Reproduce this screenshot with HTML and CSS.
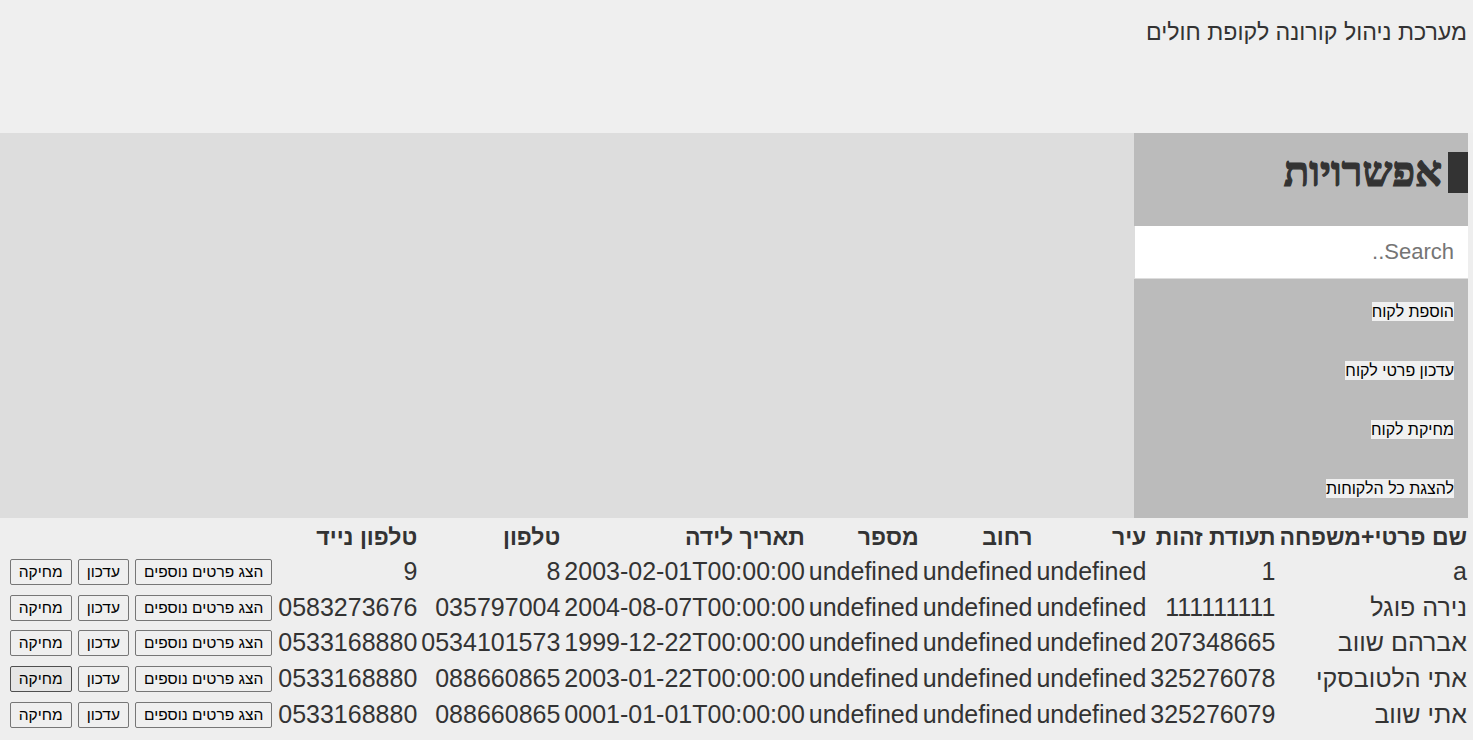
FILE: index.html
```html
<!DOCTYPE html>
<html lang="he" dir="rtl">
<head>
<meta charset="utf-8">
<title>מערכת ניהול קורונה לקופת חולים</title>
<link rel="stylesheet" href="styles.css">
</head>
<body>
<div class="page">
  <header class="top">
    <p class="title">מערכת ניהול קורונה לקופת חולים</p>
  </header>
  <div class="row">
    <aside class="side">
      <h2 class="side-title">אפשרויות</h2>
      <input class="search" type="text" placeholder="Search..">
      <ul class="menu">
        <li><a href="#">הוספת לקוח</a></li>
        <li><a href="#">עדכון פרטי לקוח</a></li>
        <li><a href="#">מחיקת לקוח</a></li>
        <li><a href="#">להצגת כל הלקוחות</a></li>
      </ul>
    </aside>
    <main class="main"></main>
  </div>
  <table class="clients">
    <thead>
      <tr>
        <th>שם פרטי+משפחה</th>
        <th>תעודת זהות</th>
        <th>עיר</th>
        <th>רחוב</th>
        <th>מספר</th>
        <th>תאריך לידה</th>
        <th>טלפון</th>
        <th>טלפון נייד</th>
        <th></th>
      </tr>
    </thead>
    <tbody>
      <tr>
        <td>a</td><td>1</td><td>undefined</td><td>undefined</td><td>undefined</td><td>2003-02-01T00:00:00</td><td>8</td><td>9</td>
        <td class="actions"><div class="btns"><button>הצג פרטים נוספים</button><button>עדכון</button><button>מחיקה</button></div></td>
      </tr>
      <tr>
        <td>נירה פוגל</td><td>111111111</td><td>undefined</td><td>undefined</td><td>undefined</td><td>2004-08-07T00:00:00</td><td>035797004</td><td>0583273676</td>
        <td class="actions"><div class="btns"><button>הצג פרטים נוספים</button><button>עדכון</button><button>מחיקה</button></div></td>
      </tr>
      <tr>
        <td>אברהם שווב</td><td>207348665</td><td>undefined</td><td>undefined</td><td>undefined</td><td>1999-12-22T00:00:00</td><td>0534101573</td><td>0533168880</td>
        <td class="actions"><div class="btns"><button>הצג פרטים נוספים</button><button>עדכון</button><button>מחיקה</button></div></td>
      </tr>
      <tr>
        <td>אתי הלטובסקי</td><td>325276078</td><td>undefined</td><td>undefined</td><td>undefined</td><td>2003-01-22T00:00:00</td><td>088660865</td><td>0533168880</td>
        <td class="actions"><div class="btns"><button>הצג פרטים נוספים</button><button>עדכון</button><button class="is-hover">מחיקה</button></div></td>
      </tr>
      <tr>
        <td>אתי שווב</td><td>325276079</td><td>undefined</td><td>undefined</td><td>undefined</td><td>0001-01-01T00:00:00</td><td>088660865</td><td>0533168880</td>
        <td class="actions"><div class="btns"><button>הצג פרטים נוספים</button><button>עדכון</button><button>מחיקה</button></div></td>
      </tr>
    </tbody>
  </table>
</div>
</body>
</html>
```

FILE: styles.css
```css
html, body {
  margin: 0;
  padding: 0;
  background: #eeeeee;
}

body {
  font-family: "Liberation Sans", Arial, sans-serif;
  color: #333333;
}

.page {
  padding-right: 5px;
}

.top {
  height: 133px;
  box-sizing: border-box;
  padding-top: 20px;
  background: #efefef;
  margin-right: -5px;
  padding-right: 6px;
}

.title {
  margin: 0;
  font-size: 23.2px;
  line-height: 25px;
  color: #333333;
}

.row {
  display: flex;
  height: 385px;
}

.side {
  width: 334px;
  flex: 0 0 334px;
  background: #bbbbbb;
  display: flex;
  flex-direction: column;
}

.side-title {
  margin: 19px 0 33px;
  height: 41px;
  line-height: 41px;
  font-family: "Liberation Serif", "Times New Roman", serif;
  font-weight: bold;
  font-size: 42px;
  color: #333333;
  -webkit-text-stroke: 1.2px #333333;
  border-right: 20px solid #333333;
  padding-right: 6px;
}

.search {
  display: block;
  width: 100%;
  height: 55px;
  box-sizing: border-box;
  margin: 0;
  padding: 0 14px;
  font-family: "Liberation Sans", Arial, sans-serif;
  font-size: 22px;
  color: #333333;
  background: #ffffff;
  border: 1px solid #dddddd;
  border-top: none;
  border-right: none;
  outline: none;
}

.search::placeholder {
  color: #757575;
}

.menu {
  list-style: none;
  margin: 0;
  padding: 3px 0 0;
}

.menu li {
  padding: 19px 14px 19px 0;
  line-height: 21px;
}

.menu a {
  font-size: 16px;
  color: #000000;
  text-decoration: none;
  background: #f0f0f0;
  padding: 1px 0;
}

.main {
  flex: 1;
  background: #dddddd;
}

.clients {
  border-collapse: separate;
  border-spacing: 0;
  margin-right: -1px;
}

.clients th {
  font-size: 23px;
  font-weight: bold;
  text-align: right;
  padding: 4px 2px 2px;
  height: 30px;
  line-height: 30px;
  color: #333333;
}

.clients td {
  font-size: 25px;
  line-height: 29.7px;
  padding: 3px 2px;
  text-align: right;
  color: #333333;
  white-space: nowrap;
}

.clients td.actions {
  padding-right: 4px;
}

.btns {
  display: flex;
  gap: 6px;
}

.btns button {
  font-family: "Liberation Sans", Arial, sans-serif;
  font-size: 15.5px;
  line-height: 18px;
  height: 26px;
  padding: 2px 8px;
  color: #000000;
  background: #efefef;
  border: 1px solid #767676;
  border-radius: 2px;
}

.btns button.is-hover {
  background: #e5e5e5;
  border-color: #4f4f4f;
}
```
